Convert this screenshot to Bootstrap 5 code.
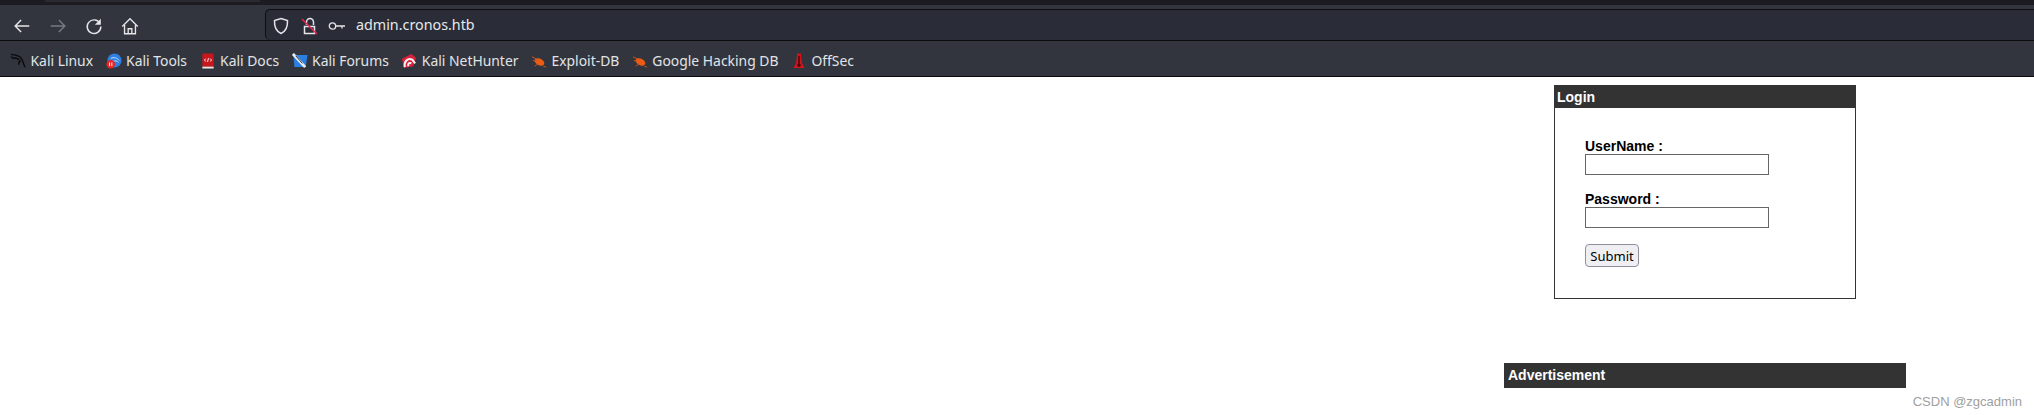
<!DOCTYPE html>
<html lang="en">
<head>
<meta charset="utf-8">
<title>admin.cronos.htb</title>
<link rel="stylesheet" href="https://cdn.jsdelivr.net/npm/bootstrap@5.3.0/dist/css/bootstrap.min.css">
<style>
html,body{height:415px;overflow:hidden;background:#fff}
body{font-family:"Liberation Sans",Arial,sans-serif;color:#000;position:relative}
.tabstrip{height:5px;background:#1c1b22}
.tabedge{height:2px;width:215px;margin-left:45px;background:#2a2a33}
.toolbar{height:36px;background:#32353d;border-bottom:1px solid #0c0c0f;padding:11px 0 0 12px}
.tool-row{gap:16px}
.tool-ic{width:20px;height:20px;color:#e4e5e8}
.tool-ic svg{width:20px;height:20px}
.urlbar{margin-left:125px;flex:1;height:31px;align-self:flex-end;background:#2a2c37;border:1px solid #0e0e11;border-bottom:0;border-right:0;border-radius:5px 0 0 5px;color:#e6e8ec;font:14.3px/1 "Noto Sans",sans-serif;padding:1px 0 0 6px}
.url-shield{margin-right:11px}
.url-lock{margin-right:9px}
.url-key{margin-right:10px}
.bmbar{height:36px;background:#32353d;border-bottom:1px solid #0c0c0f;padding:4px 0 0 10px;font:13.9px/1 "Noto Sans",sans-serif;color:#e1e4e8;gap:12.5px}
.bm{gap:4.5px}
.bm svg{width:16px;height:16px;flex:none}
.pagebody{height:338px}
.login-col{width:302px;margin-left:1554px;padding-top:8px}
.loginbox{height:214px;border:1px solid #333}
.boxhead{background:#333;color:#fff;font-weight:700;font-size:14px;line-height:23px;padding:1px 0 0 3px;height:23px}
.loginbox .boxhead{margin:-1px -1px 0}
.loginform{padding:30px 0 0 30px}
.fld-label{display:block;font-size:14px;font-weight:700;line-height:16px;margin:0}
.fld-input{display:block;width:184px;height:21px;border:1px solid #666;background:#fff;margin-bottom:16px;padding:0}
.fld-submit{display:block;width:54px;height:23px;font:13px "Noto Sans",sans-serif;background:#efeff3;border:1px solid #8f8f9d;border-radius:4px;padding:0;color:#000}
.ad-col{width:402px;margin:64px 0 0 1504px}
.ad-col .boxhead{height:25px;line-height:24px;padding:0 0 0 4px}
.watermark{position:absolute;right:12px;top:394px;font:13px "Liberation Sans",Arial,sans-serif;color:#a0a0a0;line-height:16px}
</style>
</head>
<body>
<div class="tabstrip"><div class="tabedge"></div></div>
<div class="toolbar d-flex">
  <div class="tool-row d-flex align-items-center align-self-start">
    <span class="tool-ic d-flex"><svg viewBox="0 0 22 22" fill="none" stroke="currentColor" stroke-width="1.600"><path d="M19 11H4M10 4.500 3.500 11l6.500 6.500"/></svg></span>
    <span class="tool-ic d-flex"><svg viewBox="0 0 22 22" fill="none" stroke="#777a80" stroke-width="1.600"><path d="M3 11h15M12 4.500l6.500 6.500-6.500 6.500"/></svg></span>
    <span class="tool-ic d-flex"><svg viewBox="0 0 22 22" fill="none" stroke="currentColor" stroke-width="1.600"><path d="M17.500 8a7.500 7.500 0 1 0 1 3.500"/><path d="M18.500 3v6.500h-6.500z" fill="currentColor" stroke="none"/></svg></span>
    <span class="tool-ic d-flex"><svg viewBox="0 0 22 22" fill="none" stroke="currentColor" stroke-width="1.500"><path d="M2.500 11.500 11 3l8.500 8.500M5 10v9.500h12V10M9 19.500V14h4v5.500"/></svg></span>
  </div>
  <div class="urlbar d-flex align-items-center">
    <svg width="18" height="18" viewBox="0 0 18 18" fill="none" stroke="#e4e5e8" stroke-width="1.500" class="url-shield"><path d="M9 1.500 15.500 3.500c.3 6-1 10.500-6.500 13C3.500 14 2.200 9.500 2.500 3.500z"/></svg>
    <svg width="18" height="18" viewBox="0 0 18 18" fill="none" stroke="#e4e5e8" stroke-width="1.500" class="url-lock"><path d="M5.500 8V5a3.500 3.500 0 0 1 7 0v3M3.500 9.500h10v7h-10z"/><path d="M1 2l15 15" stroke="#e22850"/></svg>
    <svg width="18" height="12" viewBox="0 0 18 12" fill="none" stroke="#e4e5e8" stroke-width="1.300" class="url-key"><circle cx="4.500" cy="6" r="3.200"/><path d="M8 6h9M14 6v2.500"/></svg>
    <span>admin.cronos.htb</span>
  </div>
</div>
<div class="bmbar d-flex align-items-center">
  <span class="bm d-flex align-items-center"><svg viewBox="0 0 17 17" fill="none" stroke="#0a0a0a" stroke-width="1.500"><path d="M1 1.500c4 .5 8 1 10.500 3.500s2.500 7 4.500 10M3 5.500c2.500-.5 5 0 7 2M1 4l3 2M11.500 8c-2 1-3 2-2 4.500"/></svg>Kali Linux</span>
  <span class="bm d-flex align-items-center"><svg viewBox="0 0 17 17"><circle cx="9" cy="8" r="7.500" fill="#2f7fe0"/><path d="M5 6c3-2 7-1 9 2M7 9c2-1 5-1 6 1" stroke="#cfe4fb" fill="none"/><circle cx="5" cy="12" r="4.500" fill="#e22"/><path d="M3.800 10v4M6.200 10v4" stroke="#fff"/></svg>Kali Tools</span>
  <span class="bm d-flex align-items-center"><svg viewBox="0 0 17 17"><rect x="2.500" y="0.500" width="12" height="14" rx="1" fill="#c8171c"/><rect x="2.500" y="14.500" width="12" height="2" fill="#e9e4e0"/><path d="M6 6 4.800 7.500 6 9M11 6l1.200 1.500L11 9M9 5.500 8 9.500" stroke="#fff" fill="none"/></svg>Kali Docs</span>
  <span class="bm d-flex align-items-center"><svg viewBox="0 0 17 17"><path d="M1.500 2h15l-2 13h-12z" fill="#2a7de1"/><path d="M1 1l13 14" stroke="#e8eef4" stroke-width="3"/><path d="M4 3l7 8" stroke="#222" stroke-width="1"/></svg>Kali Forums</span>
  <span class="bm d-flex align-items-center"><svg viewBox="0 0 17 17"><path d="M1 6l10-5 5 4-3 9-10 2z" fill="#d9203a"/><path d="M4 15c-1-6 3-10 8-8l3 4M8 14c-1-2 0-4 3-3" stroke="#f2f2f2" stroke-width="2.200" fill="none"/></svg>Kali NetHunter</span>
  <span class="bm d-flex align-items-center"><svg viewBox="0 0 17 17"><ellipse cx="9" cy="9.500" rx="5.500" ry="3.500" transform="rotate(28 9 9.500)" fill="#ee5b14"/><path d="M1 4l6 3M2 8l4 1M4 14l4-3M13 14l3 1" stroke="#c9581f" fill="none"/></svg>Exploit-DB</span>
  <span class="bm d-flex align-items-center"><svg viewBox="0 0 17 17"><ellipse cx="9" cy="9.500" rx="5.500" ry="3.500" transform="rotate(28 9 9.500)" fill="#ee5b14"/><path d="M1 4l6 3M2 8l4 1M4 14l4-3M13 14l3 1" stroke="#c9581f" fill="none"/></svg>Google Hacking DB</span>
  <span class="bm d-flex align-items-center"><svg viewBox="0 0 17 17"><path d="M6.500 0.500h4l1 10 3 5.500h-12l3-5.500z" fill="#d3141c"/><path d="M8.500 3v12M6.500 13h4" stroke="#3a0608" stroke-width="1.400"/></svg>OffSec</span>
</div>
<div class="pagebody">
  <div class="login-col">
    <div class="loginbox">
      <div class="boxhead">Login</div>
      <form class="loginform">
        <label class="fld-label" for="u">UserName :</label>
        <input class="fld-input" id="u" type="text">
        <label class="fld-label" for="p">Password :</label>
        <input class="fld-input" id="p" type="password">
        <button class="fld-submit" type="button">Submit</button>
      </form>
    </div>
  </div>
  <div class="ad-col"><div class="boxhead">Advertisement</div></div>
</div>
<div class="watermark">CSDN @zgcadmin</div>
<script src="https://cdn.jsdelivr.net/npm/bootstrap@5.3.0/dist/js/bootstrap.bundle.min.js"></script>
</body>
</html>
